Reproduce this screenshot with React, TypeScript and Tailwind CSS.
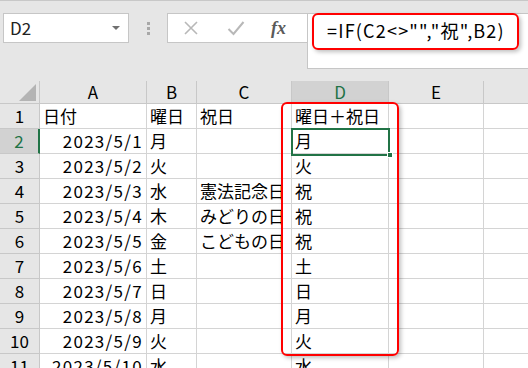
const font = "font-['Meiryo','Noto_Sans_CJK_JP',sans-serif]";

const cols = [107, 50, 95, 97, 95, 60];
const colNames = ["A", "B", "C", "D", "E", ""];

const rows: string[][] = [
  ["日付", "曜日", "祝日", "曜日＋祝日", "", ""],
  ["2023/5/1", "月", "", "月", "", ""],
  ["2023/5/2", "火", "", "火", "", ""],
  ["2023/5/3", "水", "憲法記念日", "祝", "", ""],
  ["2023/5/4", "木", "みどりの日", "祝", "", ""],
  ["2023/5/5", "金", "こどもの日", "祝", "", ""],
  ["2023/5/6", "土", "", "土", "", ""],
  ["2023/5/7", "日", "", "日", "", ""],
  ["2023/5/8", "月", "", "月", "", ""],
  ["2023/5/9", "火", "", "火", "", ""],
  ["2023/5/10", "水", "", "水", "", ""],
];

function Cell({ w, text, right }: { w: number; text: string; right?: boolean }) {
  return (
    <div
      style={{ width: w }}
      className={`h-[25px] shrink-0 border-r border-b border-[#d4d4d4] bg-white flex items-center overflow-visible whitespace-nowrap text-[17px] text-black ${
        right ? "justify-end pr-[3px] tracking-[1.3px]" : "pl-[3px]"
      }`}
    >
      {text}
    </div>
  );
}

export default function App() {
  return (
    <div className={`relative w-[528px] h-[368px] overflow-hidden bg-[#e6e6e6] ${font}`}>
      {/* formula bar */}
      <div className="h-[81px] border-t border-[#c8c8c8] flex items-start pt-[12px]">
        <div className="ml-[3px] w-[126px] h-[30px] bg-white border border-[#c6c6c6] flex items-center justify-between pl-[6px] pr-[8px]">
          <span className="text-[17px] text-[#222]">D2</span>
          <span className="w-0 h-0 border-l-[4px] border-r-[4px] border-t-[4px] border-l-transparent border-r-transparent border-t-[#707070]" />
        </div>
        <div className="w-[38px] h-[30px] flex flex-col items-center justify-center gap-[2px]">
          <span className="w-[3px] h-[3px] bg-[#a8a8a8]" />
          <span className="w-[3px] h-[3px] bg-[#a8a8a8]" />
          <span className="w-[3px] h-[3px] bg-[#a8a8a8]" />
        </div>
        <div className="w-[140px] h-[30px] bg-white border border-[#c6c6c6] border-r-0 flex items-center">
          <svg width="16" height="16" viewBox="0 0 16 16" className="ml-[15px]">
            <path d="M2 2 L14 14 M14 2 L2 14" stroke="#b8b8b8" strokeWidth="1.6" />
          </svg>
          <svg width="18" height="16" viewBox="0 0 18 16" className="ml-[28px]">
            <path d="M1.5 9 L6.5 14 L16.5 2" stroke="#b8b8b8" strokeWidth="2" fill="none" />
          </svg>
          <span className="ml-[26px] italic font-['Liberation_Serif',serif] text-[18px] text-[#5a5a5a] font-bold">fx</span>
        </div>
        <div className="flex-1 h-[56px] bg-white border border-[#c6c6c6] border-r-0 pl-[19px] pt-[3px]">
          <span className="text-[18px] tracking-[1.2px] text-black whitespace-nowrap">=IF(C2&lt;&gt;"","祝",B2)</span>
        </div>
      </div>

      {/* column headers */}
      <div className="flex h-[23px]">
        <div className="w-[40px] shrink-0 border-r border-b border-[#c8c8c8] bg-[#e6e6e6] flex items-end justify-end pr-[3px] pb-[2px]">
          <svg width="17" height="17" viewBox="0 0 17 17">
            <path d="M17 0 L17 17 L0 17 Z" fill="#b4b4b4" />
          </svg>
        </div>
        {cols.map((w, i) => (
          <div
            key={i}
            style={{ width: w }}
            className={`shrink-0 border-r border-[#c8c8c8] flex items-center justify-center text-[17px] ${
              i === 3
                ? "bg-[#d2d2d2] text-[#217346] border-b-2 border-b-[#217346]"
                : "bg-[#e6e6e6] text-black border-b border-b-[#c8c8c8]"
            }`}
          >
            {colNames[i]}
          </div>
        ))}
      </div>

      {/* rows */}
      {rows.map((r, ri) => (
        <div key={ri} className="flex">
          <div
            className={`w-[40px] h-[25px] shrink-0 border-b border-[#c8c8c8] flex items-center justify-center text-[17px] ${
              ri === 1
                ? "bg-[#d2d2d2] text-[#217346] border-r-2 border-r-[#217346]"
                : "bg-[#e6e6e6] text-black border-r border-r-[#c8c8c8]"
            }`}
          >
            {ri + 1}
          </div>
          {r.map((t, ci) => (
            <Cell key={ci} w={cols[ci]} text={t} right={ci === 0 && ri > 0} />
          ))}
        </div>
      ))}

      {/* selected cell */}
      <div className="absolute left-[291px] top-[128px] w-[99px] h-[28px] border-2 border-[#217346]" />
      <div className="absolute left-[387px] top-[152px] w-[6px] h-[6px] bg-[#217346] border border-white" />

      {/* callouts */}
      <div className="absolute left-[312px] top-[13px] w-[207px] h-[37px] rounded-[6px] border-2 border-[#ff0000] shadow-[2px_2px_4px_rgba(0,0,0,0.25)]" />
      <div className="absolute left-[281px] top-[102px] w-[118px] h-[254px] rounded-[6px] border-2 border-[#ff0000] shadow-[2px_2px_4px_rgba(0,0,0,0.25)]" />
    </div>
  );
}
